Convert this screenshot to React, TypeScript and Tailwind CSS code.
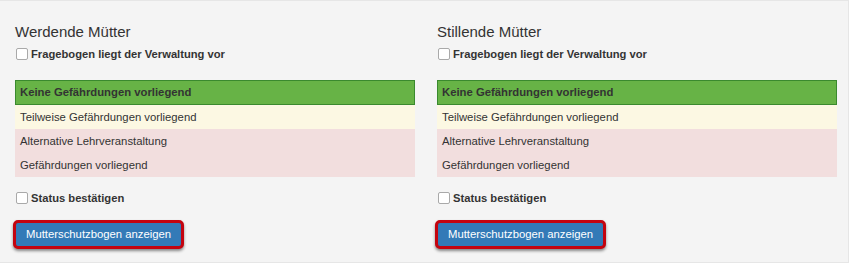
const rows = [
  { label: 'Keine Gefährdungen vorliegend', tone: 'ok' },
  { label: 'Teilweise Gefährdungen vorliegend', tone: 'warn' },
  { label: 'Alternative Lehrveranstaltung', tone: 'bad' },
  { label: 'Gefährdungen vorliegend', tone: 'bad' },
]

function StatusColumn({ title }: { title: string }) {
  return (
    <div className="w-[400px] flex flex-col">
      <h3 className="text-[15px] leading-[20px] text-[#333] mt-[21px]">{title}</h3>
      <label className="flex items-center gap-[3px] mt-[4px] h-[16px]">
        <input
          type="checkbox"
          className="w-[12px] h-[12px] m-0 ml-[1px] rounded-[2px] border border-[#a9a9a9] bg-white appearance-none"
        />
        <span className="text-[11.2px] font-bold text-[#333]">Fragebogen liegt der Verwaltung vor</span>
      </label>
      <ul className="mt-[18px] flex flex-col text-[11.3px] text-[#333]">
        {rows.map((row) => (
          <li
            key={row.label}
            className={
              row.tone === 'ok'
                ? 'h-[25px] flex items-center px-[4px] bg-[#67b346] border border-[#3a8a2e] font-bold'
                : row.tone === 'warn'
                  ? 'h-[24px] flex items-center px-[5px] bg-[#fcf8e3]'
                  : 'h-[24px] flex items-center px-[5px] bg-[#f2dede]'
            }
          >
            {row.label}
          </li>
        ))}
      </ul>
      <label className="flex items-center gap-[3px] mt-[13px] h-[16px]">
        <input
          type="checkbox"
          className="w-[12px] h-[12px] m-0 ml-[1px] rounded-[2px] border border-[#a9a9a9] bg-white appearance-none"
        />
        <span className="text-[11.2px] font-bold text-[#333]">Status bestätigen</span>
      </label>
      <div className="mt-[14px]">
        <button
          type="button"
          className="ml-[-2px] h-[29px] px-[10px] rounded-[5px] border-[3px] border-[#c4040f] bg-[#337ab7] text-white text-[11.3px] shadow-[0_2px_3px_rgba(0,0,0,0.45)]"
        >
          Mutterschutzbogen anzeigen
        </button>
      </div>
    </div>
  )
}

export default function App() {
  return (
    <div
      className="w-[849px] h-[263px] bg-[#f4f4f4] border-t border-r border-b border-[#e6e6e6] flex gap-[22px] pl-[15px]"
      style={{ fontFamily: '"Liberation Sans", Arial, sans-serif' }}
    >
      <StatusColumn title="Werdende Mütter" />
      <StatusColumn title="Stillende Mütter" />
    </div>
  )
}
